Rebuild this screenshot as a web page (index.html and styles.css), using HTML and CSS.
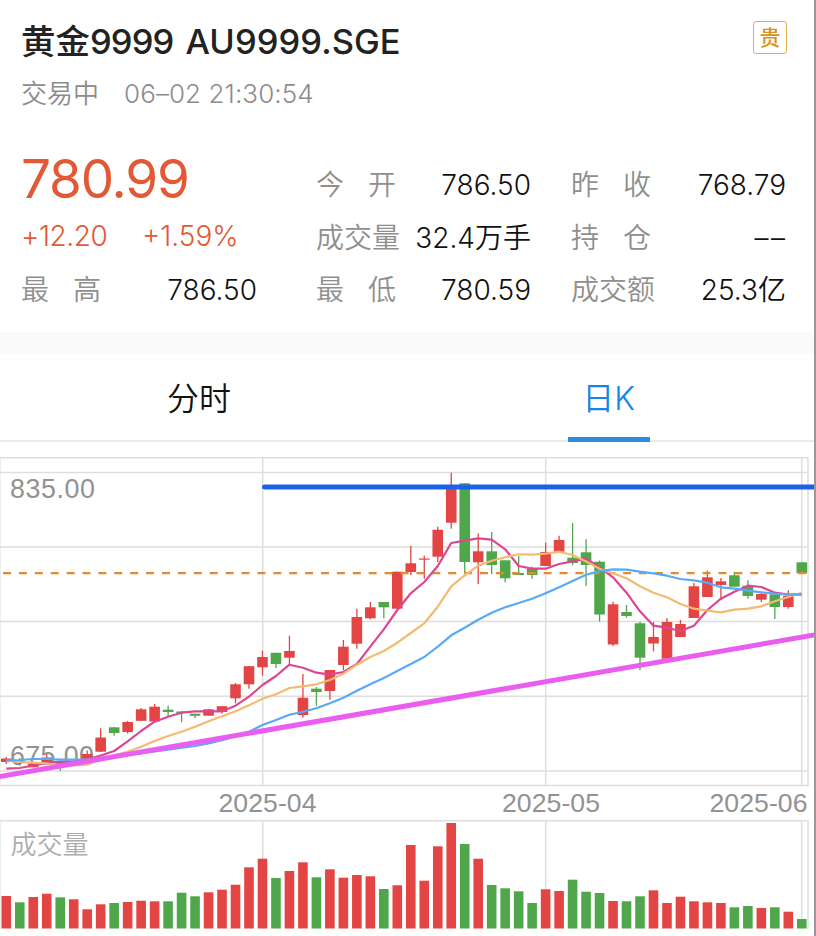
FILE: index.html
```html
<!DOCTYPE html>
<html lang="zh-CN">
<head>
<meta charset="utf-8">
<title>黄金9999 AU9999.SGE</title>
<link rel="stylesheet" href="styles.css">
</head>
<body>
<main class="page">
  <header class="head">
    <div class="title-row">
      <h1 class="title">黄金<span class="title-num">9999</span> <span class="title-code">AU9999.SGE</span></h1>
      <span class="badge">贵</span>
    </div>
    <div class="status"><span>交易中</span><span class="time">06–02 21:30:54</span></div>
  </header>
  <section class="quote">
    <div class="price">780.99</div>
    <div class="changes"><span class="chg">+12.20</span><span class="pct">+1.59%</span></div>
    <div class="item high"><span class="label pair"><i>最</i><i>高</i></span><span class="val">786.50</span></div>
    <div class="item open"><span class="label pair"><i>今</i><i>开</i></span><span class="val">786.50</span></div>
    <div class="item vol"><span class="label">成交量</span><span class="val">32.4<b>万手</b></span></div>
    <div class="item low"><span class="label pair"><i>最</i><i>低</i></span><span class="val">780.59</span></div>
    <div class="item prev"><span class="label pair"><i>昨</i><i>收</i></span><span class="val">768.79</span></div>
    <div class="item hold"><span class="label pair"><i>持</i><i>仓</i></span><span class="val dash">––</span></div>
    <div class="item amt"><span class="label">成交额</span><span class="val">25.3<b>亿</b></span></div>
  </section>
  <div class="gap"></div>
  <nav class="tabs">
    <div class="tab"><span>分时</span></div>
    <div class="tab active"><span>日<em>K</em></span></div>
  </nav>
  <svg class="chart" id="chart" viewBox="0 442 814 494" width="814" height="494"></svg>
</main>
<script src="chart.js"></script>
</body>
</html>
```
FILE: styles.css
```css
* { box-sizing: border-box; }
body {
  margin: 0;
  background: #fff;
  font-family: Inter, "Noto Sans CJK SC", sans-serif;
  color: #111;
}
i, em, b { font-style: normal; font-weight: inherit; }
.page {
  width: 816px;
  height: 936px;
  overflow: hidden;
  border-right: 2px solid #999;
}
.head { height: 152px; padding: 20px 27px 0 21px; }
.title-row { display: flex; justify-content: space-between; height: 44px; }
.title {
  margin: 0;
  font-size: 34.5px;
  line-height: 43px;
  font-weight: 500;
  color: #222;
  white-space: nowrap;
}
.title-num { letter-spacing: -0.9px; }
.title-code { margin-left: 3px; letter-spacing: 0.05px; }
.badge {
  width: 34px;
  height: 33px;
  margin-top: 1px;
  border: 1.5px solid #e3b050;
  border-radius: 3px;
  font-size: 21px;
  line-height: 32px;
  font-weight: 500;
  text-align: center;
  color: #d69420;
}
.status {
  display: flex;
  gap: 25px;
  margin-top: 11px;
  font-size: 26px;
  line-height: 38px;
  font-weight: 350;
  color: #8c8c8c;
}
.time { letter-spacing: 0.08px; }
.quote {
  display: grid;
  height: 180px;
  padding: 6px 28px 0 21px;
  grid-template: "price open prev" 53px "changes vol hold" 53px "high low amt" 53px / 295px 255px 215px;
  font-size: 28px;
  line-height: 54px;
  font-weight: 350;
}
.price { grid-area: price; font-size: 53px; line-height: 42px; font-weight: 370; color: #e25a35; letter-spacing: -1.2px; }
.changes { grid-area: changes; display: flex; color: #e25a35; line-height: 50px; }
.chg { width: 121px; letter-spacing: -0.4px; }
.item { display: flex; justify-content: space-between; width: 215px; white-space: nowrap; }
.high { grid-area: high; width: 236px; }
.open { grid-area: open; }
.vol { grid-area: vol; }
.low { grid-area: low; }
.prev { grid-area: prev; }
.hold { grid-area: hold; }
.amt { grid-area: amt; }
.high, .low, .amt { line-height: 53px; }
.label { color: #8f8f8f; }
.pair { display: flex; justify-content: space-between; width: 80px; }
.dash { letter-spacing: 2.5px; margin-right: -1.5px; }
.gap { height: 22px; background: #fafafa; }
.tabs { display: flex; height: 88px; border-bottom: 2px solid #eaeaea; }
.tab {
  width: 50%;
  padding-right: 9px;
  text-align: center;
  font-size: 32px;
  line-height: 90px;
  font-weight: 350;
}
.active { padding: 0 4px 0 0; color: #1685e8; }
.active span { display: inline-block; width: 82px; height: 88px; border-bottom: 5px solid #2f8ae2; }
.chart { display: block; }
.chart text { fill: #929292; }
.axis-text { font: 26.8px "Liberation Sans", sans-serif; }
.date-text { font: 26.6px "Liberation Sans", sans-serif; }
.vol-text { font: 350 26px "Noto Sans CJK SC", sans-serif; }
.chart .vol-text { fill: #adadad; }
.grid { stroke: #dedede; stroke-width: 1.5; fill: none; }
.edge { stroke: #eee; stroke-width: 1; fill: none; }
.up { fill: #e24543; stroke: none; }
.down { fill: #50a74b; stroke: none; }
.ma { fill: none; stroke-width: 2.2; stroke-linejoin: round; }
.ma5 { stroke: #dc4692; }
.ma10 { stroke: #f2bb70; }
.ma20 { stroke: #5aa9f8; }
.last { stroke: #e58a2c; stroke-width: 2.2; stroke-dasharray: 8 7.9; }
.resist { stroke: #1b62e8; stroke-width: 5; stroke-linecap: round; }
.trend { stroke: #e95df0; stroke-width: 5; }
```
FILE: chart.js
```js
// Each candle: colour, high, body top, body bottom, low, volume top
const candles = [
  ['r',757,758.5,762,764,896],['g',758,760.5,762,765.7,902.3],['r',763,763.5,767.3,767.3,897],
  ['r',753.7,757.5,762,762,893.7],['g',761,761.5,767,770.7,897.3],['r',761,761,764,764,899.3],
  ['r',750.5,754,760,760,909.3],['r',728.3,737.5,751.7,752,904.3],['g',727,727.3,733,735.7,903],
  ['r',721,722,732,733.5,902],['r',708,709.3,720.8,721,900.7],['r',704,706.7,721.5,721.5,901.3],
  ['g',705.6,709.7,712,716,901.3],['g',711,711.5,713,722.3,892.7],['g',713.7,713.7,715.8,718.2,896.3],
  ['r',709,709.3,715.7,715.7,892.3],['r',706,706.2,712,713.5,889.7],['r',683,684.3,698.3,703.3,884.7],
  ['r',666,666.2,684.3,688.7,867.3],['r',650.6,657,667.3,675.7,858.7],['g',652.8,652.8,664,668,878],
  ['r',635.7,651,657.7,664.6,871],['r',674,697.7,715,717.7,862.3],['g',687,688.7,692,705.7,877.3],
  ['r',670,670,691,699.7,869.3],['r',640,646.7,665,670,877.7],['r',608.7,617,643.7,648.7,875],
  ['r',602,607.3,618.3,619.3,876.3],['g',602,602,607.3,618.3,889],['r',571.7,571.7,608.7,608.7,885.3],
  ['r',546,563.3,572,575,845],['r',555.7,558.5,559.7,578.7,880.7],['r',526.7,529.7,556.7,562,846.3],
  ['r',472.7,486,522.7,528.7,823],['g',483.3,483.3,562,573.3,844],['r',533.3,551.3,562.3,584,858.7],
  ['g',532,551.3,565,574,885],['g',560.3,560.3,578.3,582.3,888.3],['g',556,573,575,575,891.3],
  ['g',566.7,568.7,575,578.7,903],['r',542.7,552,566,566,889.3],['r',535.7,540,551.7,552,891],
  ['g',523,557.7,563,565.3,879.7],['g',539.3,552.3,565,586,891.7],['g',560.5,561.7,614.5,621.7,893],
  ['r',601.7,604.3,644.5,646,901],['g',605,612,616,617.7,901.3],['g',621.7,623.3,657.7,670,896.3],
  ['r',622,637,643.5,651.3,890.3],['r',618,622,658.7,658.7,903],['r',620,624,637,637,896.7],
  ['r',583,586.3,618,618,901.3],['r',570.7,577.3,597,597,902.3],['r',578,581.3,585,600,903],
  ['g',571.7,575.3,586.7,586.7,907.3],['g',580.3,585.7,596,598.7,906],['r',593,594,599.7,602,908],
  ['g',594,594.3,607,619,907.3],['r',590.3,596,607,608.7,911.7],['g',562.3,562.3,573.3,573.3,919]
];
const ma5 = [768.7,768,765.5,763,761.7,761.7,759.5,755.5,751,741.3,731,721.7,716.7,712.7,711.3,711.3,711.3,705.7,696.7,685,676,664.7,667.7,672.7,674.7,672,664,646.7,629.3,610,593.3,582,566,543,540.7,538.3,539.7,549.3,566,568.7,568.7,564,561.3,558.7,567.3,577.3,592.7,611.3,625.7,627.7,631,625.7,610,598.7,591.7,585.7,587,592.7,594.7,594.3];
const ma10 = [760.7,762,762.7,763.5,765,765.3,764.7,759.5,755.3,751.7,746.7,741,736,731.7,726.7,721.3,716.3,711.3,705.3,698.7,694.3,688,686.3,684.3,680,673.7,664.7,657,651,642.7,633,623.3,606.7,586.3,575.3,565.7,560.7,557.3,554.3,554.7,553.7,551.7,555,561.5,568.7,573.3,578.3,586.3,592.7,597.3,604,608.7,610.7,612.3,609.7,608.7,606.3,601.3,597,592.7];
const ma20 = [760.7,760,759,759,759.7,759.7,759.3,758,756.7,755,753.3,751.3,749.7,747.7,746,743.3,740.3,736.3,731.7,725,720,714.7,711.7,708.3,703.3,697.7,690.7,684.3,678,671,664,657,646.7,635.3,627.7,619.7,612.7,607.3,603,598.7,593.3,587.3,581,574.7,571,569.3,569.7,571.7,573.3,575.7,579,580.3,582.7,587.3,588.7,590.7,592.3,593.7,594.7,594.3];

const x = i => 6.3 + 13.483 * i;
const rect = (cls, cx, w, top, bottom) =>
  `<rect class="${cls}" x="${(cx - w / 2).toFixed(2)}" y="${top}" width="${w}" height="${(bottom - top).toFixed(2)}"/>`;
const line = (cls, ys) =>
  `<polyline class="ma ${cls}" points="${ys.map((y, i) => x(i).toFixed(1) + ',' + y).join(' ')}"/>`;
const label = (cls, tx, ty, w, s) =>
  `<text class="${cls}" x="${tx}" y="${ty}" textLength="${w}">${s}</text>`;

let out = '<path class="edge" d="M0.5 458V785.5M0.5 821V929"/><path class="grid" d="M0 457.7H808V785.5H0M0 472.5H808M0 547H808M0 621.5H808M0 696.3H808M0 771H808M262.7 458V785.5M545.7 458V785.5M801.7 458V785.5M0 820.7H808V929M262.7 821V929M545.7 821V929M801.7 821V929"/>';
out += label('axis-text', 10, 497.5, 85, '835.00');
out += label('axis-text', 10, 765, 84, '675.00');
candles.forEach(([c, hi, top, bottom, lo, vol], i) => {
  const cls = c === 'r' ? 'up' : 'down';
  out += rect(cls, x(i), 1.3, hi, lo) + rect(cls, x(i), 10.6, top, bottom) + rect(cls, x(i), 9.6, vol, 928.5);
});
out += '<path class="last" d="M3 573.2H808"/>';
out += line('ma5', ma5) + line('ma10', ma10) + line('ma20', ma20);
out += '<path class="resist" d="M264.5 487H820"/><path class="trend" d="M-4 777.2L820 634"/>';
out += label('date-text', 218.5, 812, 98, '2025-04');
out += label('date-text', 502, 812, 98, '2025-05');
out += label('date-text', 709.5, 812, 98, '2025-06');
out += label('vol-text', 10.5, 854, 78, '成交量');
document.getElementById('chart').innerHTML = out;
```
